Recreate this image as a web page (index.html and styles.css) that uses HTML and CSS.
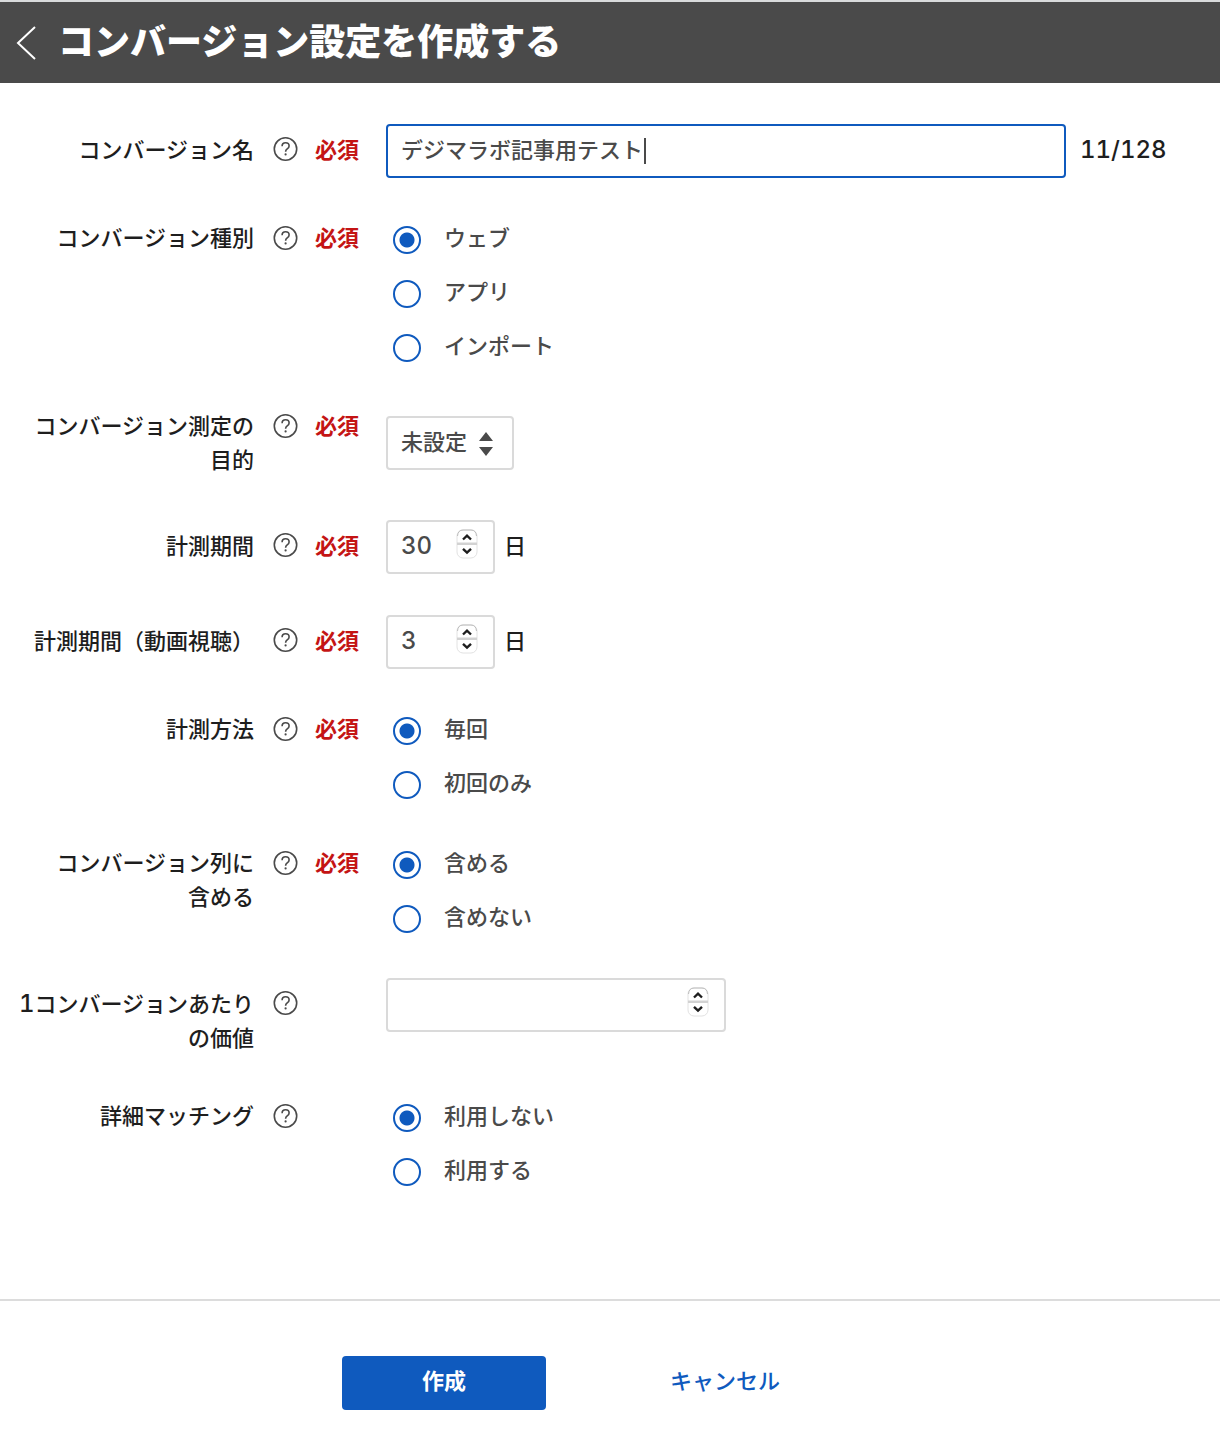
FILE: index.html
```html
<!DOCTYPE html>
<html lang="ja">
<head>
<meta charset="utf-8">
<meta name="viewport" content="width=device-width, initial-scale=1">
<title>コンバージョン設定を作成する</title>
<link rel="stylesheet" href="styles.css">
</head>
<body>
<svg class="sprite" aria-hidden="true">
  <symbol id="help" viewBox="0 0 26 26">
    <circle cx="13.500" cy="13" r="11.2" fill="none" stroke="currentColor" stroke-width="1.6"/>
    <path d="M10.1 10.2c0-2.1 1.4-3.4 3.5-3.4s3.5 1.2 3.5 3.1c0 1.5-.8 2.2-1.9 3-1.1.8-1.6 1.4-1.6 2.8" fill="none" stroke="currentColor" stroke-width="1.6"/>
    <circle cx="13.6" cy="18.4" r="1.1" fill="currentColor"/>
  </symbol>
  <symbol id="stepper" viewBox="0 0 24 32">
    <rect x="2" y="2" width="20" height="28" rx="6" fill="#fff" stroke="#e2e2e2"/>
    <path d="M2.500 8Q3 2 8 2h8q5 0 5.500 6" fill="none" stroke="#bdbdbd"/>
    <path d="M2 14.500h20v2.500H2z" fill="#d2d2d2"/>
    <path d="M8 11.500l4-3.800 4 3.800M8 20.800l4 3.800 4-3.800" fill="none" stroke="#1e1e1e" stroke-width="2.400"/>
  </symbol>
</svg>

<header class="header">
  <a class="back" href="#" aria-label="戻る">
    <svg width="20" height="34" viewBox="0 0 20 34" aria-hidden="true"><path d="M19 1L2 17l17 16" fill="none" stroke="currentColor" stroke-width="2"/></svg>
  </a>
  <h1 class="title">コンバージョン設定を作成する</h1>
</header>

<form class="form" id="conversion">
  <div class="row row--box">
    <label class="label" for="name">コンバージョン名</label>
    <svg class="help"><use href="#help"/></svg>
    <span class="required">必須</span>
    <div class="field">
      <div class="control control--text">
        <input class="input input--active" id="name" type="text" value="デジマラボ記事用テスト">
        <span class="caret"></span>
      </div>
      <span class="counter">11/128</span>
    </div>
  </div>

  <div class="row row--options" role="radiogroup" aria-labelledby="kind">
    <span class="label" id="kind">コンバージョン種別</span>
    <svg class="help"><use href="#help"/></svg>
    <span class="required">必須</span>
    <div class="options">
      <label class="option"><input class="radio" type="radio" name="kind" checked>ウェブ</label>
      <label class="option"><input class="radio" type="radio" name="kind">アプリ</label>
      <label class="option"><input class="radio" type="radio" name="kind">インポート</label>
    </div>
  </div>

  <div class="row row--select">
    <label class="label" for="purpose">コンバージョン測定の<br>目的</label>
    <svg class="help"><use href="#help"/></svg>
    <span class="required">必須</span>
    <div class="field">
      <div class="control">
        <select class="input select" id="purpose"><option>未設定</option></select>
        <svg class="arrows" width="14" height="26" viewBox="0 0 14 26" aria-hidden="true"><path d="M7 1l7 9H0zM7 25l7-9H0z" fill="currentColor"/></svg>
      </div>
    </div>
  </div>

  <div class="row row--box">
    <label class="label" for="period">計測期間</label>
    <svg class="help"><use href="#help"/></svg>
    <span class="required">必須</span>
    <div class="field">
      <div class="control control--days">
        <input class="input input--number" id="period" type="number" value="30">
        <svg class="stepper"><use href="#stepper"/></svg>
      </div>
      <span class="unit">日</span>
    </div>
  </div>

  <div class="row row--box">
    <label class="label" for="video">計測期間（動画視聴）</label>
    <svg class="help"><use href="#help"/></svg>
    <span class="required">必須</span>
    <div class="field">
      <div class="control control--days">
        <input class="input input--number" id="video" type="number" value="3">
        <svg class="stepper"><use href="#stepper"/></svg>
      </div>
      <span class="unit">日</span>
    </div>
  </div>

  <div class="row row--options" role="radiogroup" aria-labelledby="method">
    <span class="label" id="method">計測方法</span>
    <svg class="help"><use href="#help"/></svg>
    <span class="required">必須</span>
    <div class="options">
      <label class="option"><input class="radio" type="radio" name="method" checked>毎回</label>
      <label class="option"><input class="radio" type="radio" name="method">初回のみ</label>
    </div>
  </div>

  <div class="row row--options" role="radiogroup" aria-labelledby="column">
    <span class="label" id="column">コンバージョン列に<br>含める</span>
    <svg class="help"><use href="#help"/></svg>
    <span class="required">必須</span>
    <div class="options">
      <label class="option"><input class="radio" type="radio" name="column" checked>含める</label>
      <label class="option"><input class="radio" type="radio" name="column">含めない</label>
    </div>
  </div>

  <div class="row row--box row--value">
    <label class="label" for="value"><span class="digit">1</span>コンバージョンあたり<br>の価値</label>
    <svg class="help"><use href="#help"/></svg>
    <div class="field">
      <div class="control control--value">
        <input class="input input--number" id="value" type="number">
        <svg class="stepper"><use href="#stepper"/></svg>
      </div>
    </div>
  </div>

  <div class="row row--options" role="radiogroup" aria-labelledby="matching">
    <span class="label" id="matching">詳細マッチング</span>
    <svg class="help"><use href="#help"/></svg>
    <div class="options">
      <label class="option"><input class="radio" type="radio" name="matching" checked>利用しない</label>
      <label class="option"><input class="radio" type="radio" name="matching">利用する</label>
    </div>
  </div>
</form>

<footer class="footer">
  <button class="submit" type="submit" form="conversion">作成</button>
  <a class="cancel" href="#">キャンセル</a>
</footer>
</body>
</html>
```
FILE: styles.css
```css
* { box-sizing: border-box; }

body {
  margin: 0;
  background: #fff;
  color: #1e1e1e;
  font: 500 22px/34px "Noto Sans CJK JP", sans-serif;
}

.sprite { display: none; }

.header {
  display: flex;
  align-items: center;
  gap: 22px;
  padding: 10px 16px 17px;
  border-top: 2px solid #d9dbdc;
  background: #4a4a4a;
  color: #fff;
}

.back {
  display: flex;
  padding-top: 8px;
  color: inherit;
}

.title {
  margin: 0;
  font-size: 36px;
  line-height: 54px;
  font-weight: 900;
}

.form { padding: 41px 16px 114px 18px; }

.row {
  display: grid;
  grid-template-columns: 236px 25px 44px minmax(0, 1fr);
  align-items: start;
  margin-bottom: 44px;
  column-gap: 18px;
}

.row--box { margin-bottom: 41px; }
.row--options { margin-bottom: 46px; }
.row--select { margin-bottom: 45px; }
.row--value { margin-bottom: 44px; }
.row:last-child { margin-bottom: 0; }

.label { text-align: right; }

.help {
  width: 26px;
  height: 26px;
  margin-top: 6px;
  color: #4a4a4a;
}

.required {
  color: #c41414;
  font-weight: 700;
}

.row--box > .label,
.row--box > .required { margin-top: 7px; }
.row--box > .help { margin-top: 12px; }
.row--select > .field { margin-top: 9px; }

.field {
  display: flex;
  align-items: center;
}

.field, .options { grid-column: 4; margin-left: 9px; }

.control {
  position: relative;
  min-width: 0;
}

.control--text { flex: 0 1 680px; }
.control--days { width: 109px; }
.control--value { width: 340px; }

.input {
  display: block;
  width: 100%;
  height: 54px;
  padding: 0 13px 6px;
  border: 2px solid #dadada;
  border-radius: 4px;
  outline: 0;
  background: #fff;
  color: #4a4a4a;
  font: inherit;
}

.input--active { border-color: #0f5abe; }

.input--number {
  appearance: textfield;
  padding-bottom: 4px;
  font-family: Inter, sans-serif;
  font-size: 24px;
  font-variant-numeric: tabular-nums;
}

.input--number::-webkit-inner-spin-button { display: none; }

.select {
  appearance: none;
  width: 128px;
}

.caret {
  position: absolute;
  top: 14px;
  left: 258px;
  width: 2px;
  height: 26px;
  background: #4a4a4a;
}

.arrows {
  position: absolute;
  top: 15px;
  right: 21px;
  color: #4a4a4a;
  pointer-events: none;
}

.stepper {
  position: absolute;
  top: 8px;
  right: 16px;
  width: 24px;
  height: 32px;
  pointer-events: none;
}

.counter {
  margin-left: 14px;
  padding-bottom: 2px;
}

.counter, .digit {
  font-family: Inter, sans-serif;
  font-size: 24px;
  font-variant-numeric: tabular-nums;
}

.digit { line-height: 1; }

.unit {
  margin-left: 9px;
  padding-bottom: 6px;
}

.options {
  display: flex;
  flex-direction: column;
  gap: 20px;
}

.option {
  display: flex;
  align-items: center;
  gap: 23px;
  height: 34px;
  padding-left: 7px;
  color: #4a4a4a;
}

.radio {
  appearance: none;
  flex: none;
  width: 28px;
  height: 28px;
  margin: 7px 0 0;
  border: 2px solid #0f5abe;
  border-radius: 50%;
  background: #fff;
}

.radio:checked { background: radial-gradient(circle, #0f5abe 7px, #fff 8px); }

.footer {
  display: flex;
  align-items: center;
  gap: 124px;
  padding: 55px 16px 38px 342px;
  border-top: 2px solid #dcdcdc;
}

.submit {
  width: 204px;
  height: 54px;
  padding: 0 0 8px;
  border: 0;
  border-radius: 4px;
  background: #0f5abe;
  color: #fff;
  font: inherit;
  font-weight: 700;
}

.cancel {
  padding-bottom: 8px;
  color: #0f5abe;
  text-decoration: none;
}
```
